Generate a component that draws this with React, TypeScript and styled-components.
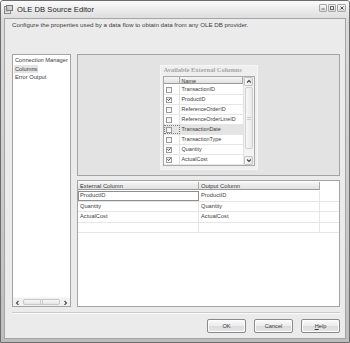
import React from "react";
import styled, { createGlobalStyle } from "styled-components";

const Global = createGlobalStyle`
  html, body { margin: 0; padding: 0; background: #ffffff; }
  body { font-family: "Liberation Sans", Arial, sans-serif; color: #333; }
  * { box-sizing: border-box; }
`;

const Window = styled.div`
  width: 350px;
  height: 343px;
  border: 1px solid #6c6c6c;
  border-radius: 3px 3px 0 0;
  background: linear-gradient(#dcdcdc, #bdbdbd);
  display: flex;
  flex-direction: column;
  overflow: hidden;
`;

const TitleBar = styled.div`
  height: 17px;
  flex: none;
  display: flex;
  align-items: center;
  padding: 0 3px 0 3px;
  gap: 4px;
  background: linear-gradient(#fbfbfb, #e9e9e9 60%, #dedede);
`;

const TitleText = styled.div`
  font-size: 7.6px;
  color: #222;
  flex: 1;
  letter-spacing: 0.05px;
`;

const Controls = styled.div`
  display: flex;
  gap: 1px;
  align-self: flex-start;
  margin-top: 3px;
`;

const CtrlBtn = styled.div<{ $w?: number }>`
  width: ${(p) => p.$w ?? 8}px;
  height: 8px;
  border: 1px solid #a8a8a8;
  border-radius: 1px;
  background: linear-gradient(#f7f7f7, #d9d9d9);
  display: flex;
  align-items: center;
  justify-content: center;
`;

const Body = styled.div`
  flex: 1;
  margin: 0 3px 3px;
  background: #ebebeb;
  border: 1px solid #a5a5a5;
  display: flex;
  flex-direction: column;
  padding: 0 5px 0 7px;
`;

const Description = styled.div`
  height: 35px;
  flex: none;
  padding-top: 2px;
  font-size: 6.2px;
  line-height: 7px;
  color: #404040;
  white-space: nowrap;
`;

const Main = styled.div`
  height: 253px;
  flex: none;
  display: flex;
  gap: 6px;
`;

const NavList = styled.div`
  width: 59px;
  flex: none;
  border: 1px solid #a3a3a3;
  background: #ffffff;
  display: flex;
  flex-direction: column;
  padding-top: 1px;
`;

const NavItem = styled.div<{ $selected?: boolean }>`
  align-self: flex-start;
  height: 8.5px;
  line-height: 8.5px;
  font-size: 5.7px;
  margin-left: 1px;
  padding: 0 1px;
  color: #3a3a3a;
  background: ${(p) => (p.$selected ? "#e4e4e4" : "transparent")};
`;

const HScroll = styled.div`
  margin-top: auto;
  height: 9px;
  display: flex;
  align-items: stretch;
  background: #f1f1f1;
  border-top: 1px solid #f7f7f7;
`;

const ScrollArrow = styled.div`
  width: 9px;
  flex: none;
  display: flex;
  align-items: center;
  justify-content: center;
`;

const HThumb = styled.div`
  flex: 1;
  margin: 1px 1px;
  border: 1px solid #c8c8c8;
  border-radius: 2px;
  background: linear-gradient(#f7f7f7, #e4e4e4);
  display: flex;
  align-items: center;
  justify-content: center;
`;

const Grip = styled.div<{ $vertical?: boolean }>`
  width: ${(p) => (p.$vertical ? 4 : 3)}px;
  height: ${(p) => (p.$vertical ? 3 : 4)}px;
  border-left: ${(p) => (p.$vertical ? "none" : "1px solid #cccccc")};
  border-right: ${(p) => (p.$vertical ? "none" : "1px solid #cccccc")};
  border-top: ${(p) => (p.$vertical ? "1px solid #cccccc" : "none")};
  border-bottom: ${(p) => (p.$vertical ? "1px solid #cccccc" : "none")};
`;

const RightColumn = styled.div`
  flex: 1;
  display: flex;
  flex-direction: column;
  gap: 4px;
`;

const UpperPanel = styled.div`
  height: 122px;
  flex: none;
  background: #e3e3e3;
  border: 1px solid #a4a4a4;
  display: flex;
  justify-content: center;
  align-items: flex-start;
  padding-top: 10px;
`;

const ColumnsBox = styled.div`
  width: 98px;
  height: 105px;
  background: #efefef;
  border: 1px solid #f6f6f6;
  display: flex;
  flex-direction: column;
  padding: 0 2px 3px 2px;
`;

const BoxTitle = styled.div`
  height: 10px;
  line-height: 8.5px;
  padding-left: 1px;
  font-size: 6.5px;
  font-weight: bold;
  color: #a6a6a6;
  font-family: "Liberation Serif", "Times New Roman", serif;
  white-space: nowrap;
`;

const ColGrid = styled.div`
  flex: 1;
  display: flex;
  border: 1px solid #a9a9a9;
  background: #ffffff;
`;

const ColTable = styled.div`
  flex: 1;
  display: flex;
  flex-direction: column;
`;

const Row = styled.div<{ $h: number; $bg?: string; $line?: string }>`
  height: ${(p) => p.$h}px;
  flex: none;
  display: flex;
  background: ${(p) => p.$bg ?? "transparent"};
  border-bottom: 1px solid ${(p) => p.$line ?? "#e6e6e6"};
`;

const HeadCell = styled.div<{ $w?: number; $size?: number }>`
  ${(p) => (p.$w ? `width: ${p.$w}px; flex: none;` : "flex: 1;")}
  background: linear-gradient(#f5f5f5, #e1e1e1);
  border-right: 1px solid #a9a9a9;
  border-bottom: 1px solid #9a9a9a;
  font-size: ${(p) => p.$size ?? 5.4}px;
  line-height: 8px;
  padding-left: 2px;
  color: #3a3a3a;
  white-space: nowrap;
  overflow: hidden;
`;

const CheckCell = styled.div<{ $focus?: boolean }>`
  width: 16px;
  flex: none;
  display: flex;
  align-items: center;
  padding-left: 2px;
  border-right: 1px solid #e2e2e2;
  outline: ${(p) => (p.$focus ? "1px dotted #808080" : "none")};
  outline-offset: -1px;
`;

const NameCell = styled.div`
  flex: 1;
  font-size: 5.4px;
  line-height: 9px;
  padding-left: 2px;
  color: #404040;
  white-space: nowrap;
  overflow: hidden;
`;

const CheckBox = styled.div`
  width: 6px;
  height: 6px;
  border: 1px solid #9a9a9a;
  background: linear-gradient(#ececec, #ffffff);
  display: flex;
  align-items: center;
  justify-content: center;
`;

const VScroll = styled.div`
  width: 11px;
  flex: none;
  display: flex;
  flex-direction: column;
  background: #f3f3f3;
  border-left: 1px solid #e2e2e2;
`;

const VArrow = styled.div`
  height: 9px;
  flex: none;
  display: flex;
  align-items: center;
  justify-content: center;
  border: 1px solid #c6c6c6;
  border-radius: 1px;
  background: linear-gradient(90deg, #fafafa, #e4e4e4);
  margin: 0 0.5px;
`;

const VTrack = styled.div`
  flex: 1;
  display: flex;
  flex-direction: column;
  padding: 1px 1px;
`;

const VThumb = styled.div`
  height: 62px;
  border: 1px solid #d0d0d0;
  border-radius: 2px;
  background: linear-gradient(90deg, #f8f8f8, #e8e8e8);
  display: flex;
  align-items: center;
  justify-content: center;
`;

const LowerPanel = styled.div`
  flex: 1;
  background: #ffffff;
  border: 1px solid #a4a4a4;
  display: flex;
  flex-direction: column;
  padding-top: 1px;
`;

const OutCell = styled.div<{ $focus?: boolean }>`
  width: 121px;
  flex: none;
  font-size: 5.7px;
  line-height: 9.5px;
  padding-left: 2px;
  color: #404040;
  border-right: 1px solid #e6e6e6;
  outline: ${(p) => (p.$focus ? "1px solid #8d8d8d" : "none")};
  outline-offset: -1px;
`;

const Separator = styled.div`
  margin-top: 5px;
  height: 2px;
  flex: none;
  border-top: 1px solid #cbcbcb;
  border-bottom: 1px solid #fbfbfb;
`;

const ButtonRow = styled.div`
  margin-top: 5px;
  display: flex;
  justify-content: flex-end;
  gap: 8px;
`;

const Button = styled.div`
  width: 39px;
  height: 14px;
  border: 1px solid #8a8a8a;
  border-radius: 2px;
  background: linear-gradient(#fbfbfb, #ececec 50%, #dcdcdc 51%, #e6e6e6);
  box-shadow: inset 0 0 0 1px #fcfcfc;
  display: flex;
  align-items: center;
  justify-content: center;
  font-size: 5.7px;
  color: #3a3a3a;
`;

const Underline = styled.span`
  text-decoration: underline;
`;

const Chevron = ({ dir }: { dir: "left" | "right" | "up" | "down" }) => {
  const paths: Record<string, string> = {
    left: "M3.5 1 L1.5 3 L3.5 5",
    right: "M1.5 1 L3.5 3 L1.5 5",
    up: "M1 3.5 L3 1.5 L5 3.5",
    down: "M1 1.5 L3 3.5 L5 1.5",
  };
  return (
    <svg width="5" height="5" viewBox="0 0 5 5">
      <path d={paths[dir]} fill="none" stroke="#4a4a4a" strokeWidth="1.1" />
    </svg>
  );
};

const Check = () => (
  <svg width="5" height="5" viewBox="0 0 5 5">
    <path d="M0.6 2.4 L1.9 3.8 L4.4 1" fill="none" stroke="#2a2a2a" strokeWidth="1.1" />
  </svg>
);

const TitleIcon = () => (
  <svg width="9" height="9" viewBox="0 0 9 9">
    <rect x="0.5" y="1.5" width="6" height="7" fill="#e8e8e8" stroke="#8a8a8a" />
    <rect x="2.5" y="0.5" width="6" height="5" fill="#d0d0d0" stroke="#7a7a7a" />
    <path d="M1.5 4 H4.5 M1.5 6 H4.5" stroke="#9a9a9a" />
  </svg>
);

const externalColumns: { name: string; checked: boolean }[] = [
  { name: "TransactionID", checked: false },
  { name: "ProductID", checked: true },
  { name: "ReferenceOrderID", checked: false },
  { name: "ReferenceOrderLineID", checked: false },
  { name: "TransactionDate", checked: false },
  { name: "TransactionType", checked: false },
  { name: "Quantity", checked: true },
  { name: "ActualCost", checked: true },
];

const mappings = ["ProductID", "Quantity", "ActualCost"];

export default function App() {
  return (
    <>
      <Global />
      <Window>
        <TitleBar>
          <TitleIcon />
          <TitleText>OLE DB Source Editor</TitleText>
          <Controls>
            <CtrlBtn>
              <svg width="4" height="4" viewBox="0 0 4 4">
                <path d="M0.5 3 H3.5" stroke="#666" />
              </svg>
            </CtrlBtn>
            <CtrlBtn>
              <svg width="4" height="4" viewBox="0 0 4 4">
                <rect x="0.5" y="0.5" width="3" height="3" fill="none" stroke="#666" />
              </svg>
            </CtrlBtn>
            <CtrlBtn $w={9}>
              <svg width="4" height="4" viewBox="0 0 4 4">
                <path d="M0.5 0.5 L3.5 3.5 M3.5 0.5 L0.5 3.5" stroke="#555" />
              </svg>
            </CtrlBtn>
          </Controls>
        </TitleBar>
        <Body>
          <Description>
            Configure the properties used by a data flow to obtain data from any OLE DB provider.
          </Description>
          <Main>
            <NavList>
              <NavItem>Connection Manager</NavItem>
              <NavItem $selected>Columns</NavItem>
              <NavItem>Error Output</NavItem>
              <HScroll>
                <ScrollArrow>
                  <Chevron dir="left" />
                </ScrollArrow>
                <HThumb>
                  <Grip />
                </HThumb>
                <ScrollArrow>
                  <Chevron dir="right" />
                </ScrollArrow>
              </HScroll>
            </NavList>
            <RightColumn>
              <UpperPanel>
                <ColumnsBox>
                  <BoxTitle>Available External Columns</BoxTitle>
                  <ColGrid>
                    <ColTable>
                      <Row $h={8} $line="transparent">
                        <HeadCell $w={16} />
                        <HeadCell>Name</HeadCell>
                      </Row>
                      {externalColumns.map((c) => (
                        <Row
                          key={c.name}
                          $h={10}
                          $bg={c.name === "TransactionDate" ? "#e4e4e4" : "#ffffff"}
                        >
                          <CheckCell $focus={c.name === "TransactionDate"}>
                            <CheckBox>{c.checked && <Check />}</CheckBox>
                          </CheckCell>
                          <NameCell>{c.name}</NameCell>
                        </Row>
                      ))}
                    </ColTable>
                    <VScroll>
                      <VArrow>
                        <Chevron dir="up" />
                      </VArrow>
                      <VTrack>
                        <VThumb>
                          <Grip $vertical />
                        </VThumb>
                      </VTrack>
                      <VArrow>
                        <Chevron dir="down" />
                      </VArrow>
                    </VScroll>
                  </ColGrid>
                </ColumnsBox>
              </UpperPanel>
              <LowerPanel>
                <Row $h={9} $line="transparent">
                  <HeadCell $w={121} $size={5.8}>External Column</HeadCell>
                  <HeadCell $w={121} $size={5.8}>Output Column</HeadCell>
                </Row>
                {mappings.map((m, i) => (
                  <Row key={m} $h={10.5}>
                    <OutCell $focus={i === 0}>{m}</OutCell>
                    <OutCell>{m}</OutCell>
                  </Row>
                ))}
                <Row $h={10.5}>
                  <OutCell />
                  <OutCell />
                </Row>
              </LowerPanel>
            </RightColumn>
          </Main>
          <Separator />
          <ButtonRow>
            <Button>OK</Button>
            <Button>Cancel</Button>
            <Button>
              <Underline>H</Underline>elp
            </Button>
          </ButtonRow>
        </Body>
      </Window>
    </>
  );
}
